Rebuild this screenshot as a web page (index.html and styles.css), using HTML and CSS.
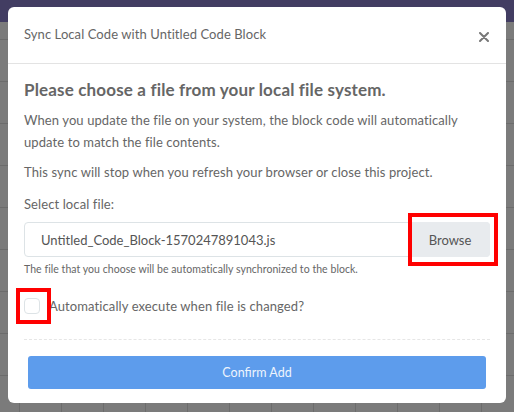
FILE: index.html
```html
<!DOCTYPE html>
<html>
<head>
<meta charset="utf-8">
<link rel="stylesheet" href="styles.css">
</head>
<body>
<div class="topbar"></div>
<div class="modal">
  <div class="modal-header">
    <div class="modal-title">Sync Local Code with Untitled Code Block</div>
    <div class="close">
      <svg width="10" height="10" viewBox="0 0 10 10"><path d="M1 1L9 9M9 1L1 9" stroke="#777" stroke-width="2" stroke-linecap="round"/></svg>
    </div>
  </div>
  <div class="modal-body">
    <h2 class="heading">Please choose a file from your local file system.</h2>
    <p class="para p1">When you update the file on your system, the block code will automatically update to match the file contents.</p>
    <p class="para p2">This sync will stop when you refresh your browser or close this project.</p>
    <div class="label">Select local file:</div>
    <div class="input-group">
      <div class="input">Untitled_Code_Block-1570247891043.js</div>
      <div class="browse">Browse</div>
      <div class="mark mark-browse"></div>
    </div>
    <div class="help">The file that you choose will be automatically synchronized to the block.</div>
    <div class="check-row">
      <span class="checkbox"></span>
      <span class="check-label">Automatically execute when file is changed?</span>
      <div class="mark mark-check"></div>
    </div>
    <div class="dashed"></div>
    <div class="confirm">Confirm Add</div>
  </div>
</div>
</body>
</html>
```
FILE: styles.css
```css
* { box-sizing: border-box; }
html, body { margin: 0; padding: 0; }
body {
  width: 514px;
  height: 412px;
  overflow: hidden;
  font-family: "Lato", "Open Sans", sans-serif;
  background-color: #7b7b7b;
  background-image:
    linear-gradient(#6c6c6c 1px, transparent 1px),
    linear-gradient(90deg, #6c6c6c 1px, transparent 1px);
  background-size: 42px 42px;
  background-position: 19px 39px;
  position: relative;
}
.topbar {
  position: absolute;
  left: 0; top: 0;
  width: 514px;
  height: 22px;
  background: #423d62;
}
.modal {
  position: relative;
  margin: 7px 0 0 8px;
  width: 498px;
  height: 396px;
  background: #fff;
  border-radius: 6px;
  display: flex;
  flex-direction: column;
}
.modal-header {
  height: 57px;
  border-bottom: 1px solid #e3e3e3;
  display: flex;
  align-items: center;
  justify-content: space-between;
  padding: 0 17px 0 16px;
}
.modal-title {
  font-size: 13px;
  letter-spacing: 0.08px;
  color: #666;
  margin-top: -2px;
}
.close { display: flex; margin-top: 3px; }
.modal-body {
  padding: 14px 16px 0 16px;
}
.heading {
  margin: 0;
  font-size: 17px;
  line-height: 24px;
  font-weight: 700;
  letter-spacing: 0.16px;
  color: #666;
}
.para {
  margin: 0;
  font-size: 13px;
  line-height: 22px;
  letter-spacing: 0.1px;
  color: #666;
}
.p1 { margin-top: 7px; }
.p2 { margin-top: 8px; }
.label {
  margin-top: 10px;
  font-size: 13px;
  line-height: 22px;
  letter-spacing: 0.1px;
  color: #666;
}
.input-group {
  position: relative;
  margin-top: 7px;
  height: 35px;
  display: flex;
  border: 1px solid #dde3e6;
  border-radius: 4px;
}
.input {
  flex: 1;
  display: flex;
  align-items: center;
  padding-left: 16px;
  font-size: 13px;
  color: #555;
}
.browse {
  width: 80px;
  background: #e8ebee;
  display: flex;
  align-items: center;
  justify-content: center;
  font-size: 13px;
  color: #555;
  border-radius: 0 4px 4px 0;
  margin: -1px -1px -1px 0;
}
.mark {
  position: absolute;
  border: 4px solid #ff0000;
}
.mark-browse {
  right: -9px;
  top: -10px;
  width: 90px;
  height: 53px;
}
.help {
  margin-top: 5px;
  font-size: 10.5px;
  line-height: 14px;
  letter-spacing: 0.05px;
  color: #666;
}
.check-row {
  position: relative;
  margin-top: 19px;
  height: 22px;
  display: flex;
  align-items: center;
}
.checkbox {
  width: 16px;
  height: 16px;
  border: 1px solid #dde3e6;
  border-radius: 4px;
  background: #fff;
}
.check-label {
  margin-left: 9px;
  font-size: 13px;
  letter-spacing: 0.1px;
  color: #666;
}
.mark-check {
  left: -8px;
  top: -7px;
  width: 35px;
  height: 36px;
}
.dashed {
  margin-top: 22px;
  border-top: 1px dashed #e6e6e6;
}
.confirm {
  margin: 16px 4px 0 4px;
  height: 33px;
  background: #5d9cec;
  border-radius: 3px;
  color: #eef4fd;
  font-size: 12.5px;
  display: flex;
  align-items: center;
  justify-content: center;
}
```
